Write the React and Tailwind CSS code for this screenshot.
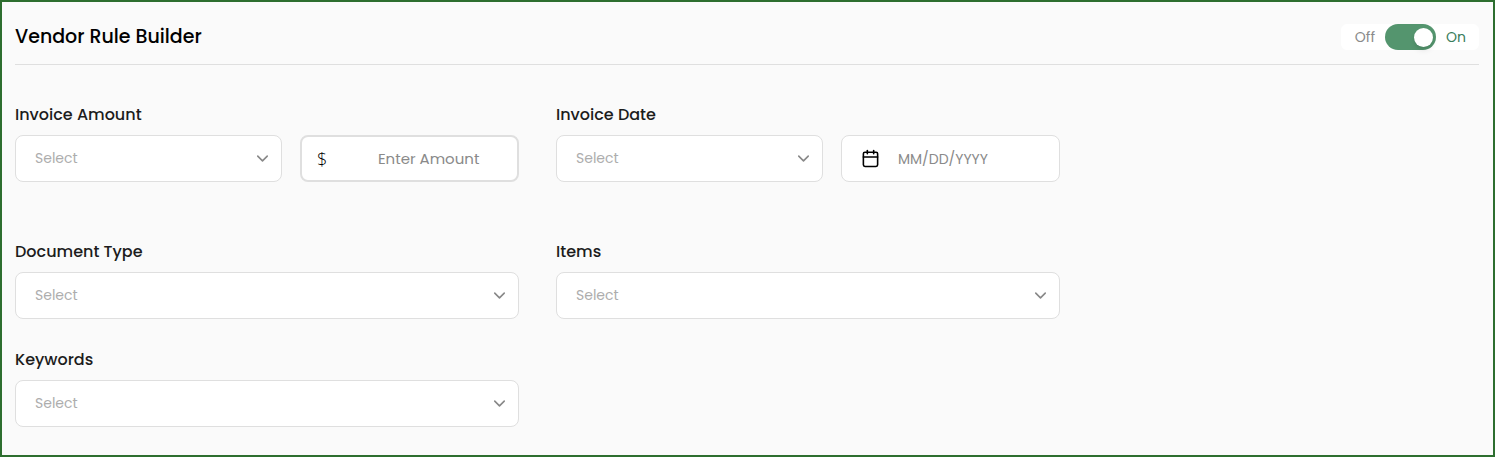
import { useState } from "react";
import { Calendar, ChevronDown } from "lucide-react";

const SelectBox = ({ id, label }) => {
  return (
    <div className="relative flex-1">
      <select
        id={id}
        aria-label={label}
        defaultValue=""
        className="block h-[47px] w-full appearance-none rounded-lg border border-[#dfdfdf] bg-white pr-10 pb-[2px] pl-[19px] text-sm text-[#adadad] outline-none"
      >
        <option value="">Select</option>
      </select>
      <ChevronDown size={19} strokeWidth={2} className="pointer-events-none absolute top-[14px] right-[10px] text-[#888888]" />
    </div>
  );
};

const Field = ({ id, label, className = "", children }) => {
  return (
    <div className={`flex flex-col gap-2 ${className}`}>
      <label htmlFor={id} className="pt-px text-base font-medium text-[#1c1c1c]">{label}</label>
      <div className="flex gap-[18px]">
        <SelectBox id={id} label={label} />
        {children}
      </div>
    </div>
  );
};

const Toggle = () => {
  const [on, setOn] = useState(true);

  return (
    <label className="flex h-[26px] items-center gap-[10px] rounded-md bg-white pr-[13px] pl-[14px] text-sm">
      <span className="text-[#8a8a8a]">Off</span>
      <input
        type="checkbox"
        role="switch"
        aria-label="Vendor Rule Builder"
        checked={on}
        onChange={(e) => setOn(e.target.checked)}
        className="flex h-[26px] w-[51px] appearance-none items-center rounded-full bg-gray-300 px-[3px] before:size-[19px] before:rounded-full before:bg-white before:shadow-md checked:justify-end checked:bg-[#54956e]"
      />
      <span className="text-[#3a7d5c]">On</span>
    </label>
  );
};

export default function App() {
  return (
    <main className="border-2 border-[#2d6e2f] bg-[#fafafa] pt-[22px] pr-[14px] pb-7 pl-[13px] font-['Poppins','Inter',sans-serif]">
      <header className="flex items-center justify-between border-b border-[#dfdfdf] pb-[14px]">
        <h1 className="text-[19px] leading-6 font-medium text-black">Vendor Rule Builder</h1>
        <Toggle />
      </header>

      <form className="mt-[37px] grid max-w-[1045px] grid-cols-2 gap-x-[37px]">
        <Field id="amount-rule" label="Invoice Amount">
          <div className="flex h-[47px] w-[219px] items-center rounded-lg border-2 border-[#dfdfdf] bg-white px-[15px]">
            <span className="font-['Open_Sans',sans-serif] text-lg font-light text-black">$</span>
            <input
              type="text"
              aria-label="Amount"
              placeholder="Enter Amount"
              className="ml-7 w-full min-w-0 bg-transparent pt-[2px] text-center text-[15px] outline-none placeholder:text-[#8a8a8a]"
            />
          </div>
        </Field>
        <Field id="date-rule" label="Invoice Date">
          <div className="flex h-[47px] w-[219px] items-center gap-[18px] rounded-lg border border-[#dfdfdf] bg-white px-[19px]">
            <Calendar size={19} className="shrink-0 text-black" />
            <input
              type="text"
              aria-label="Date"
              placeholder="MM/DD/YYYY"
              className="w-full min-w-0 bg-transparent text-sm outline-none placeholder:text-[#8a8a8a]"
            />
          </div>
        </Field>
        <Field id="document-type" label="Document Type" className="mt-[57px]" />
        <Field id="items" label="Items" className="mt-[57px]" />
        <Field id="keywords" label="Keywords" className="mt-7" />
      </form>
    </main>
  );
}
